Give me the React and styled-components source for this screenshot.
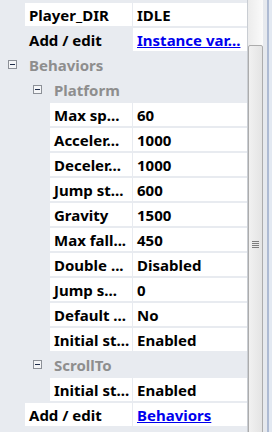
import React from "react";
import styled, { createGlobalStyle } from "styled-components";

const Global = createGlobalStyle`
  html, body { margin: 0; padding: 0; }
  body {
    width: 272px;
    height: 432px;
    overflow: hidden;
    background: #e8ebf0;
    font-family: "Noto Sans", "Open Sans", sans-serif;
  }
`;

const Frame = styled.div`
  display: flex;
  width: 272px;
  height: 432px;
  overflow: hidden;
`;

const Grid = styled.div`
  flex: 0 0 247px;
  display: flex;
  flex-direction: column;
  gap: 2px;
  padding-top: 3px;
`;

const Row = styled.div`
  display: grid;
  grid-template-columns: 132px 114px;
  column-gap: 1px;
  height: 23px;
`;

const NameCell = styled.div`
  margin-left: ${(p) => p.$indent}px;
  background: ${(p) => (p.$plain ? "transparent" : "#ffffff")};
  padding-left: 4px;
  display: flex;
  align-items: center;
  font-size: 15px;
  font-weight: 700;
  color: #000;
  white-space: nowrap;
  overflow: hidden;
`;

const ValueCell = styled.div`
  background: #ffffff;
  padding-left: 4px;
  display: flex;
  align-items: center;
  font-size: 15px;
  font-weight: 700;
  color: #000;
  white-space: nowrap;
  overflow: hidden;
`;

const Link = styled.a`
  color: #0000ee;
  text-decoration: underline;
  cursor: pointer;
`;

const Header = styled.div`
  height: 23px;
  display: flex;
  align-items: center;
  padding-left: ${(p) => p.$indent}px;
  gap: 12px;
  font-size: 15px;
  font-weight: 700;
  color: #8e8e8e;
  white-space: nowrap;
`;

const Toggle = styled.span`
  box-sizing: border-box;
  width: 9px;
  height: 9px;
  border: 1px solid #8c9097;
  background: #f4f5f7;
  position: relative;
  flex: 0 0 9px;
  &::after {
    content: "";
    position: absolute;
    left: 1px;
    top: 3px;
    width: 5px;
    height: 1px;
    background: #1e2c4a;
  }
`;

const ScrollArea = styled.div`
  flex: 0 0 25px;
  display: flex;
  height: 432px;
`;

const Track = styled.div`
  flex: 0 0 15px;
  border-left: 1px solid #c9cdd3;
  background: linear-gradient(to right, #ececec, #fafafa);
  display: flex;
  flex-direction: column;
  padding-top: 45px;
`;

const Thumb = styled.div`
  box-sizing: border-box;
  width: 15px;
  flex: 1;
  margin-bottom: -40px;
  border: 1px solid #acacac;
  border-radius: 2px;
  background: linear-gradient(to right, #f1f1f1, #e4e4e4);
  display: flex;
  align-items: center;
  justify-content: center;
  padding-bottom: 28px;
`;

const Grip = styled.div`
  display: flex;
  flex-direction: column;
  gap: 1px;
  & > span {
    display: block;
    width: 7px;
    height: 1px;
    background: #7d7d7d;
  }
`;

const Edge = styled.div`
  flex: 0 0 4px;
  background: #e6e9ee;
`;

const Border = styled.div`
  flex: 0 0 2px;
  background: #aebbd3;
`;

const Outer = styled.div`
  flex: 0 0 3px;
  background: #e3e9f2;
`;

const subRows = [
  ["Max sp...", "60"],
  ["Acceler...", "1000"],
  ["Deceler...", "1000"],
  ["Jump st...", "600"],
  ["Gravity", "1500"],
  ["Max fall...", "450"],
  ["Double ...", "Disabled"],
  ["Jump s...", "0"],
  ["Default ...", "No"],
  ["Initial st...", "Enabled"],
];

export default function App() {
  return (
    <>
      <Global />
      <Frame>
        <Grid>
          <Row>
            <NameCell $indent={25}>Player_DIR</NameCell>
            <ValueCell>IDLE</ValueCell>
          </Row>
          <Row>
            <NameCell $indent={25} $plain>Add / edit</NameCell>
            <ValueCell>
              <Link>Instance var...</Link>
            </ValueCell>
          </Row>
          <Header $indent={8}>
            <Toggle />
            Behaviors
          </Header>
          <Header $indent={33}>
            <Toggle />
            Platform
          </Header>
          {subRows.map(([n, v]) => (
            <Row key={n + v}>
              <NameCell $indent={50}>{n}</NameCell>
              <ValueCell>{v}</ValueCell>
            </Row>
          ))}
          <Header $indent={33}>
            <Toggle />
            ScrollTo
          </Header>
          <Row>
            <NameCell $indent={50}>Initial st...</NameCell>
            <ValueCell>Enabled</ValueCell>
          </Row>
          <Row>
            <NameCell $indent={25}>Add / edit</NameCell>
            <ValueCell>
              <Link>Behaviors</Link>
            </ValueCell>
          </Row>
        </Grid>
        <ScrollArea>
          <Track>
            <Thumb>
              <Grip>
                <span />
                <span />
                <span />
                <span />
              </Grip>
            </Thumb>
          </Track>
          <Edge />
          <Border />
          <Outer />
        </ScrollArea>
      </Frame>
    </>
  );
}
